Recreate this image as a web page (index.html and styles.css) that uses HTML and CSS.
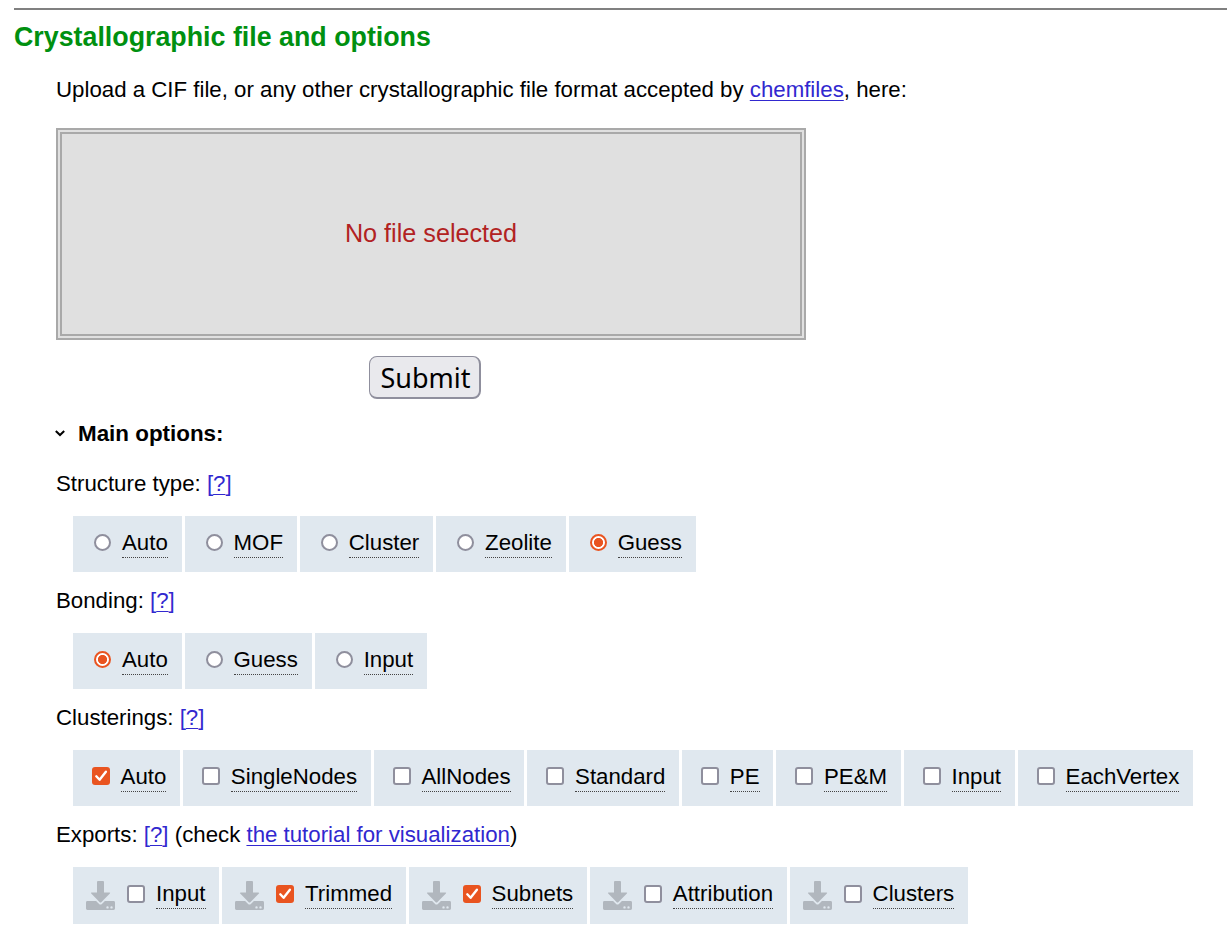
FILE: index.html
```html
<!DOCTYPE html>
<html lang="en">
<head>
<meta charset="utf-8">
<title>Crystallographic file and options</title>
<link rel="stylesheet" href="styles.css">
</head>
<body>
<svg width="0" height="0" class="defs">
  <symbol id="download" viewBox="0 0 29 29">
    <path d="M12 0h5q1 0 1 1v10.500h5.400q1.300 0 .5 1L15 21.400q-.5.400-1 0L5.200 12.500q-.8-1 .5-1H11V1q0-1 1-1z"/>
    <path fill-rule="evenodd" d="M1.400 20h8.700l3 3q1.400 1.200 2.800 0l3-3h8.700q1.400 0 1.400 1.400v6.200q0 1.400-1.400 1.400H1.400Q0 29 0 27.600v-6.200Q0 20 1.400 20zM21.500 25.200a1.200 1.200 0 1 0 0 2.400 1.200 1.200 0 0 0 0-2.400zM25.500 25.200a1.200 1.200 0 1 0 0 2.400 1.200 1.200 0 0 0 0-2.400z"/>
  </symbol>
  <symbol id="check" viewBox="0 0 18 18">
    <path d="M4.300 9.300l3.300 3.500 6.300-8" fill="none" stroke="#fff" stroke-width="2.400" stroke-linecap="round" stroke-linejoin="round"/>
  </symbol>
</svg>
<main class="page">
  <h2 class="title">Crystallographic file and options</h2>
  <form class="form">
    <p class="intro">Upload a CIF file, or any other crystallographic file format accepted by <a href="#">chemfiles</a>, here:</p>
    <div class="drop">No file selected</div>
    <div class="actions"><button type="button" class="submit">Submit</button></div>
    <div class="summary">
      <svg class="chevron" width="10" height="7" viewBox="0 0 10 7"><path d="M.8 1l4.200 4 4.200-4" fill="none" stroke="#000" stroke-width="2"/></svg>
      <span class="heading">Main options:</span>
    </div>

    <p class="label">Structure type: <a class="help" href="#">[<u>?</u>]</a></p>
    <div class="row radios">
      <label class="opt"><i class="radio"></i><span class="name">Auto</span></label>
      <label class="opt"><i class="radio"></i><span class="name">MOF</span></label>
      <label class="opt"><i class="radio"></i><span class="name">Cluster</span></label>
      <label class="opt"><i class="radio"></i><span class="name">Zeolite</span></label>
      <label class="opt"><i class="radio on"></i><span class="name">Guess</span></label>
    </div>

    <p class="label">Bonding: <a class="help" href="#">[<u>?</u>]</a></p>
    <div class="row radios">
      <label class="opt"><i class="radio on"></i><span class="name">Auto</span></label>
      <label class="opt"><i class="radio"></i><span class="name">Guess</span></label>
      <label class="opt"><i class="radio"></i><span class="name">Input</span></label>
    </div>

    <p class="label">Clusterings: <a class="help" href="#">[<u>?</u>]</a></p>
    <div class="row checks">
      <label class="opt"><i class="box on"><svg><use href="#check"/></svg></i><span class="name">Auto</span></label>
      <label class="opt"><i class="box"></i><span class="name">SingleNodes</span></label>
      <label class="opt"><i class="box"></i><span class="name">AllNodes</span></label>
      <label class="opt"><i class="box"></i><span class="name">Standard</span></label>
      <label class="opt"><i class="box"></i><span class="name">PE</span></label>
      <label class="opt"><i class="box"></i><span class="name">PE&amp;M</span></label>
      <label class="opt"><i class="box"></i><span class="name">Input</span></label>
      <label class="opt"><i class="box"></i><span class="name">EachVertex</span></label>
    </div>

    <p class="label">Exports: <a class="help" href="#">[<u>?</u>]</a> (check <a href="#">the tutorial for visualization</a>)</p>
    <div class="row exports">
      <label class="opt"><svg class="dl"><use href="#download"/></svg><i class="box"></i><span class="name">Input</span></label>
      <label class="opt"><svg class="dl"><use href="#download"/></svg><i class="box on"><svg><use href="#check"/></svg></i><span class="name">Trimmed</span></label>
      <label class="opt"><svg class="dl"><use href="#download"/></svg><i class="box on"><svg><use href="#check"/></svg></i><span class="name">Subnets</span></label>
      <label class="opt"><svg class="dl"><use href="#download"/></svg><i class="box"></i><span class="name">Attribution</span></label>
      <label class="opt"><svg class="dl"><use href="#download"/></svg><i class="box"></i><span class="name">Clusters</span></label>
    </div>
  </form>
</main>
</body>
</html>
```

FILE: styles.css
```css
* { box-sizing: border-box; }
body {
  margin: 0;
  height: 940px;
  overflow: hidden;
  background: #fff;
  color: #000;
  font: 22.26px/26px "Liberation Sans", Arial, sans-serif;
}
.defs { display: block; }
.page { margin: 8px 0 0 14px; border-top: 2px solid #808080; }
.title {
  margin: 12px 0 0;
  font-size: 26.8px;
  line-height: 30px;
  font-weight: bold;
  color: #009010;
  white-space: nowrap;
}
.form { margin: 0 0 0 42px; }
.intro { margin: 25px 0 0; white-space: nowrap; }
a {
  color: #3128cf;
  text-decoration: underline;
  text-decoration-thickness: 1px;
  text-underline-offset: 3px;
}
.help { text-decoration: none; }
.help u { text-decoration-thickness: 1px; text-underline-offset: 3px; }
.drop {
  margin-top: 25px;
  width: 750px;
  height: 212px;
  padding-bottom: 2px;
  border: 6px double #a9a9a9;
  background: #e0e0e0;
  color: #b22222;
  font-size: 25.2px;
  display: flex;
  align-items: center;
  justify-content: center;
}
.actions { width: 738px; display: flex; justify-content: center; margin-top: 16px; }
.submit {
  width: 112px;
  height: 43px;
  padding: 2px 0 0 2px;
  border: 1px solid #8f8f9d;
  border-width: 1px 2px 2px 1px;
  border-radius: 8px;
  background: #e9e9ed;
  color: #000;
  font: 27px/36px "Noto Sans", sans-serif;
}
.summary {
  display: flex;
  align-items: center;
  gap: 13px;
  margin-top: 20px;
  font-size: 22.4px;
  font-weight: bold;
}
.heading { padding-top: 2px; }
.chevron { margin-left: -1px; }
.label { margin: 24px 0 0; }
.row { display: flex; gap: 2.900px; margin: 19px 0 0 17px; }
.row + .label { margin-top: 16px; }
.opt {
  height: 56px;
  display: flex;
  align-items: center;
  padding: 0 13.900px 4px 21px;
  background: #e0e8ef;
  white-space: nowrap;
}
.name { position: relative; padding-top: 2px; line-height: 26px; }
.name::after {
  content: "";
  position: absolute;
  left: 0;
  right: 0;
  bottom: -2px;
  border-bottom: 1px dotted #444;
}
.radio {
  width: 17px;
  height: 17px;
  margin-right: 11px;
  border: 2px solid #8f8f9d;
  border-radius: 50%;
  background: #fff;
}
.radio.on {
  border-color: #e95420;
  background: radial-gradient(circle, #e95420 4.200px, #fff 5px);
}
.checks { gap: 3px; }
.checks .opt { padding-left: 19px; }
.box {
  width: 18px;
  height: 18px;
  margin-right: 11px;
  border: 2px solid #8f8f9d;
  border-radius: 3px;
  background: #fff;
}
.checks .box { margin-right: 10.600px; }
.box.on { border: 0; background: #e95420; }
.box svg { display: block; width: 18px; height: 18px; }
.exports { gap: 2.900px; }
.exports .opt { height: 57px; padding: 0 13.700px 4px 13px; }
.exports .name { padding-top: 1px; }
.dl { width: 29px; height: 29px; margin: 4px 12px 0 0; fill: #b1b7be; }
```
